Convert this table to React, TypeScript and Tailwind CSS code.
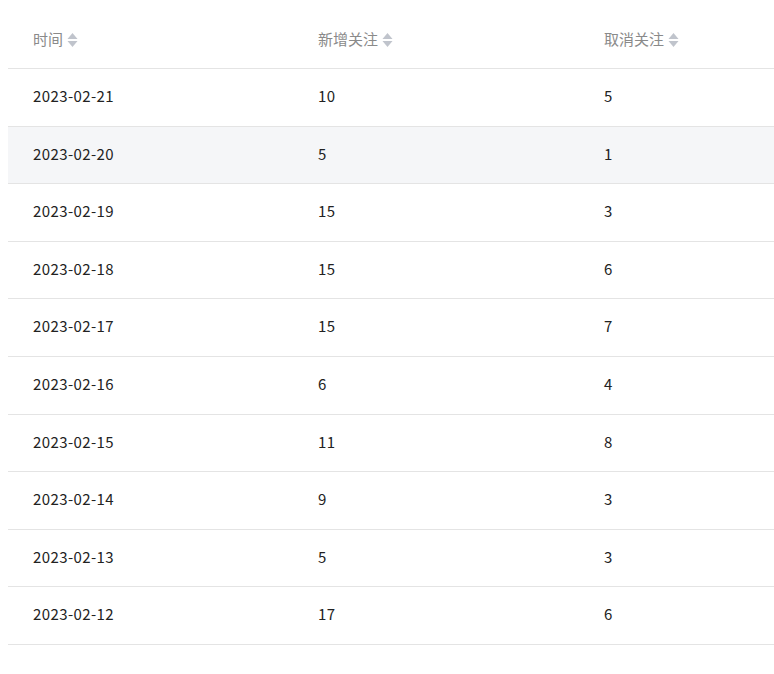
import React from "react";

const rows = [
  ["2023-02-21", "10", "5"],
  ["2023-02-20", "5", "1"],
  ["2023-02-19", "15", "3"],
  ["2023-02-18", "15", "6"],
  ["2023-02-17", "15", "7"],
  ["2023-02-16", "6", "4"],
  ["2023-02-15", "11", "8"],
  ["2023-02-14", "9", "3"],
  ["2023-02-13", "5", "3"],
  ["2023-02-12", "17", "6"],
];

function Caret() {
  return (
    <svg width="11" height="16" viewBox="0 0 11 16" className="ml-[4px]">
      <polygon points="5.5,1 10.5,7 0.5,7" fill="#c0c4cc" />
      <polygon points="0.5,9 10.5,9 5.5,15" fill="#c0c4cc" />
    </svg>
  );
}

function Head({ label }: { label: string }) {
  return (
    <div className="flex items-center">
      <span>{label}</span>
      <Caret />
    </div>
  );
}

export default function App() {
  return (
    <div
      className="bg-white w-[774px] h-[674px] overflow-hidden pt-[11px] pl-2 text-[15px]"
      style={{ fontFamily: '"Noto Sans CJK SC", "Noto Sans", sans-serif' }}
    >
      <div className="flex h-[58px] items-center border-b border-[#e4e4e4] text-[#8a8a8a]">
        <div className="w-[285px] pl-[25px]"><Head label="时间" /></div>
        <div className="w-[286px] pl-[25px]"><Head label="新增关注" /></div>
        <div className="flex-1 pl-[25px]"><Head label="取消关注" /></div>
      </div>
      {rows.map((r, i) => (
        <div
          key={i}
          className={`flex h-[57.6px] items-center pb-[2px] border-b border-[#e4e4e4] text-[#222] tracking-[0.4px] ${
            i === 1 ? "bg-[#f5f6f8]" : ""
          }`}
        >
          <div className="w-[285px] pl-[25px]">{r[0]}</div>
          <div className="w-[286px] pl-[25px]">{r[1]}</div>
          <div className="flex-1 pl-[25px]">{r[2]}</div>
        </div>
      ))}
    </div>
  );
}
